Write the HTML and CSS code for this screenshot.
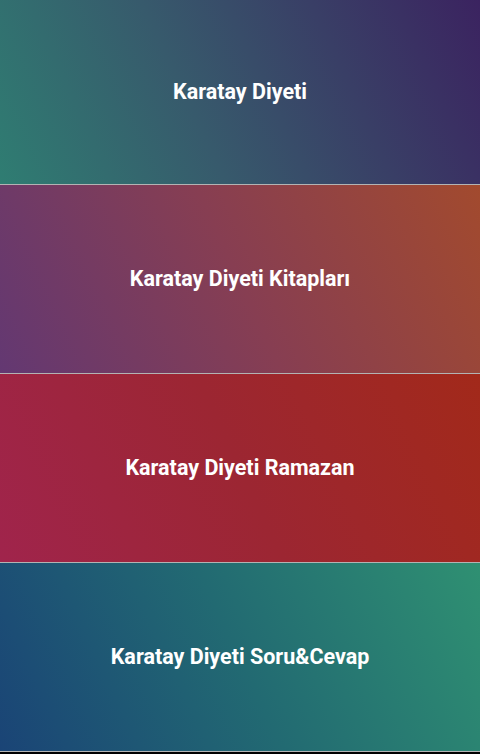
FILE: index.html
```html
<!DOCTYPE html>
<html lang="tr">

<head>
    <meta charset="UTF-8">
    <meta name="viewport" content="width=device-width, initial-scale=1.0">
    <title>Karatay Diyeti</title>
    <link rel="stylesheet" href="styles.css">
</head>

<body>
    <ul class="menu-list">
        <li class="menu-item item-first item-diet">Karatay Diyeti</li>
        <li class="menu-item item-books">Karatay Diyeti Kitapları</li>
        <li class="menu-item item-ramadan">Karatay Diyeti Ramazan</li>
        <li class="menu-item item-faq">Karatay Diyeti Soru&amp;Cevap</li>
    </ul>
</body>

</html>
```

FILE: styles.css
```css
html,
body {
    margin: 0;
    padding: 0;
    background-color: #000;
}

.menu-list {
    list-style: none;
    margin: 0;
    padding: 0;
    display: flex;
    flex-direction: column;
    gap: 1px;
    background-color: rgba(255, 255, 255, 0.7);
    padding-bottom: 1px;
}

.menu-item {
    height: 188px;
    display: flex;
    align-items: center;
    justify-content: center;
    color: #fff;
    font-family: Roboto, "Noto Sans", sans-serif;
    font-weight: 700;
    font-size: 21.5px;
    padding-bottom: 1px;
    box-sizing: border-box;
    cursor: pointer;
}

.item-first {
    height: 184px;
}

.item-diet {
    background: linear-gradient(65deg, #2f7d72 0%, #375a6c 40%, #3b2360 100%);
}

.item-books {
    background: linear-gradient(65deg, #633872 0%, #873e52 50%, #a24a2e 100%);
}

.item-ramadan {
    background: linear-gradient(65deg, #a0244c 0%, #9c2632 50%, #a2291a 100%);
}

.item-faq {
    background: linear-gradient(65deg, #1a4476 0%, #226a72 50%, #2f9072 100%);
}
```
